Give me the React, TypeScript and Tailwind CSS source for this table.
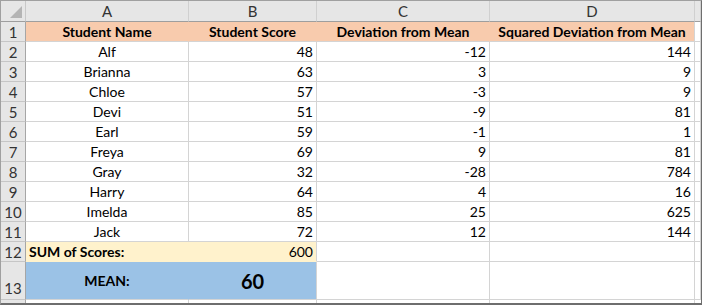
import React from "react";

type Row = { name: string; score: number; dev: number; sq: number };

const rows: Row[] = [
  { name: "Alf", score: 48, dev: -12, sq: 144 },
  { name: "Brianna", score: 63, dev: 3, sq: 9 },
  { name: "Chloe", score: 57, dev: -3, sq: 9 },
  { name: "Devi", score: 51, dev: -9, sq: 81 },
  { name: "Earl", score: 59, dev: -1, sq: 1 },
  { name: "Freya", score: 69, dev: 9, sq: 81 },
  { name: "Gray", score: 32, dev: -28, sq: 784 },
  { name: "Harry", score: 64, dev: 4, sq: 16 },
  { name: "Imelda", score: 85, dev: 25, sq: 625 },
  { name: "Jack", score: 72, dev: 12, sq: 144 },
];

const grid = "grid grid-cols-[25px_163px_128px_173px_205px_6px]";
const cell = "flex items-center pt-[1px] border-r border-b border-[#d4d4d4] text-[14px] leading-none";
const rowHead =
  "flex items-center justify-center pt-[1px] bg-[#e6e6e6] border-r border-b border-r-[#a6a6a6] border-b-[#c6c6c6] text-[15px] text-[#333] leading-none";

export default function App() {
  return (
    <div
      className="w-[702px] h-[305px] overflow-hidden bg-white border-l border-t border-[#a0a0a0] border-r border-b border-r-[#6e6e6e] border-b-[#6e6e6e] border-b-2"
      style={{ fontFamily: "Lato, 'Noto Sans', sans-serif" }}
    >
      {/* column headers */}
      <div className={`${grid} h-[21px] bg-[#e6e6e6] text-[15px] text-[#333] leading-none`}>
        <div className="flex items-center justify-center border-r border-b border-r-[#c8c8c8] border-b-[#9e9e9e]">
          <svg width="14" height="14" viewBox="0 0 14 14" className="ml-[6px] mt-[1px]">
            <polygon points="13,1 13,13 1,13" fill="#b4b4b4" />
          </svg>
        </div>
        {["A", "B", "C", "D", ""].map((l, i) => (
          <div
            key={i}
            className="flex items-center justify-center border-r border-b border-r-[#d0d0d0] border-b-[#9e9e9e]"
          >
            {l}
          </div>
        ))}
      </div>

      {/* row 1 */}
      <div className={`${grid} h-[20px]`}>
        <div className={rowHead}>1</div>
        <div className={`${cell} justify-center font-bold bg-[#f8cbad] border-r-[#f8cbad]`}>Student Name</div>
        <div className={`${cell} justify-center font-bold bg-[#f8cbad] border-r-[#f8cbad]`}>Student Score</div>
        <div className={`${cell} justify-center font-bold bg-[#f8cbad] border-r-[#f8cbad]`}>Deviation from Mean</div>
        <div className={`${cell} justify-center font-bold bg-[#f8cbad]`}>Squared Deviation from Mean</div>
        <div className={cell}></div>
      </div>

      {rows.map((r, i) => (
        <div key={r.name} className={`${grid} h-[20px]`}>
          <div className={rowHead}>{i + 2}</div>
          <div className={`${cell} justify-center`}>{r.name}</div>
          <div className={`${cell} justify-end pr-[3px]`}>{r.score}</div>
          <div className={`${cell} justify-end pr-[3px]`}>{r.dev}</div>
          <div className={`${cell} justify-end pr-[3px]`}>{r.sq}</div>
          <div className={cell}></div>
        </div>
      ))}

      {/* row 12 */}
      <div className={`${grid} h-[20px]`}>
        <div className={rowHead}>12</div>
        <div className={`${cell} justify-start pl-[3px] font-bold bg-[#fff2cc] border-r-[#fff2cc] border-b-[#fff2cc]`}>
          SUM of Scores:
        </div>
        <div className={`${cell} justify-end pr-[3px] bg-[#fff2cc] border-b-[#fff2cc]`}>600</div>
        <div className={cell}></div>
        <div className={cell}></div>
        <div className={cell}></div>
      </div>

      {/* row 13 */}
      <div className={`${grid} h-[38px]`}>
        <div className={`${rowHead} items-end pb-[3px]`}>13</div>
        <div className={`${cell} justify-center font-bold bg-[#9bc2e6] border-r-[#9bc2e6]`}>MEAN:</div>
        <div className={`${cell} justify-center font-bold text-[20px] bg-[#9bc2e6]`}>60</div>
        <div className={cell}></div>
        <div className={cell}></div>
        <div className={cell}></div>
      </div>

      {/* row 14 partial */}
      <div className={`${grid} h-[4px]`}>
        <div className="bg-[#e6e6e6] border-r border-[#a6a6a6]"></div>
        <div className="border-r border-[#d4d4d4]"></div>
        <div className="border-r border-[#d4d4d4]"></div>
        <div className="border-r border-[#d4d4d4]"></div>
        <div className="border-r border-[#d4d4d4]"></div>
        <div></div>
      </div>
    </div>
  );
}
